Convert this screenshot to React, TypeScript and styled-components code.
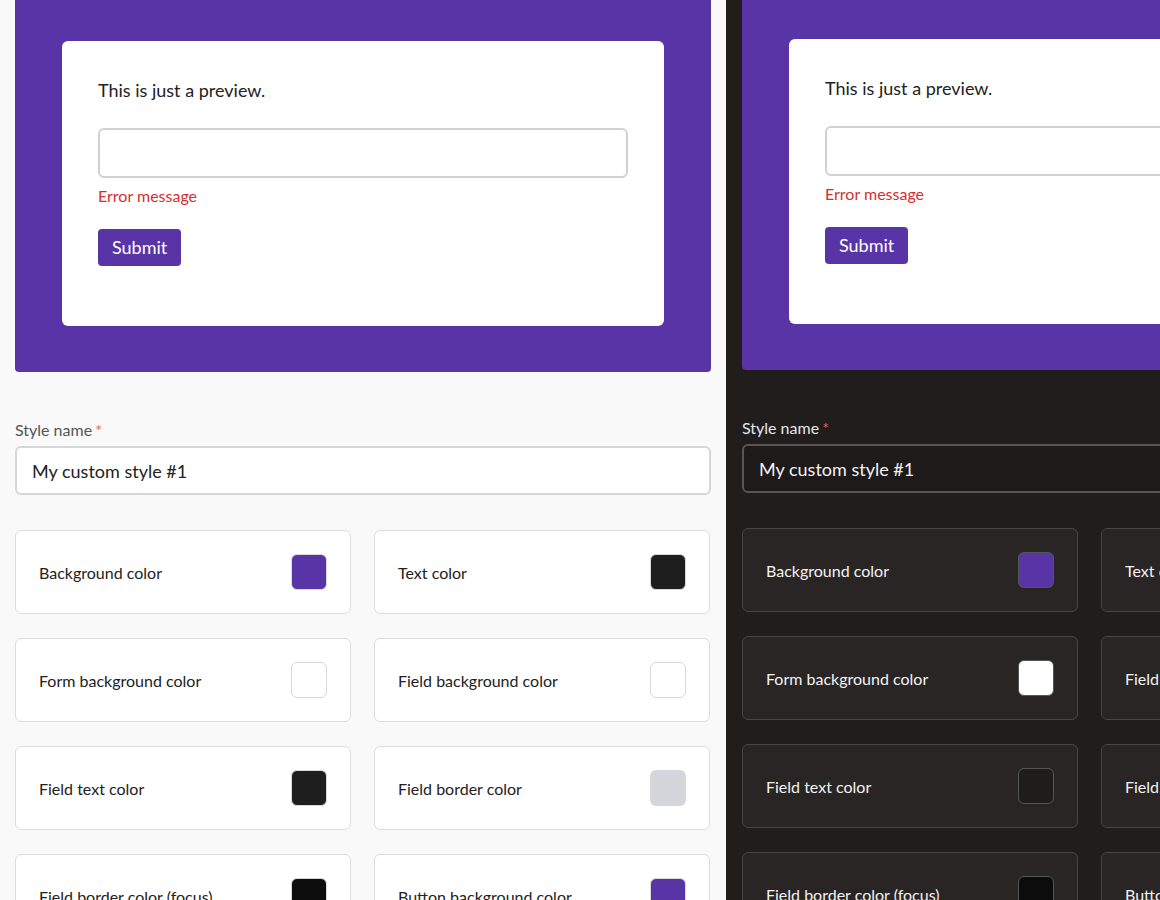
import styled, { createGlobalStyle } from "styled-components";

const GlobalStyle = createGlobalStyle`
  body { margin: 0; font-family: Lato, "Liberation Sans", sans-serif; overflow: hidden; }
`;

type Mode = "light" | "dark";

const palette = {
  light: { bg: "#f9f9f9", card: "#ffffff", border: "#dddddd", text: "#222222", label: "#555555", inputBorder: "#d6d6d6" },
  dark: { bg: "#211d1d", card: "#2a2525", border: "#4a4545", text: "#f2f2f2", label: "#e6e6e6", inputBorder: "#5a5555" },
};

const Page = styled.div`
  display: grid;
  grid-template-columns: 726px 726px;
  height: 900px;
  width: 1160px;
  overflow: hidden;
`;

const Panel = styled.div<{ $mode: Mode }>`
  background: ${(p) => palette[p.$mode].bg};
  padding: 0 15px 0 ${(p) => (p.$mode === "dark" ? "16px" : "15px")};
  display: flex;
  flex-direction: column;
  margin-top: ${(p) => (p.$mode === "dark" ? "-2px" : "0")};
`;

const Preview = styled.div`
  background: #5834a6;
  padding: 41px 47px 46px;
  border-radius: 0 0 4px 4px;
`;

const FormCard = styled.div`
  background: #fff;
  border-radius: 6px;
  padding: 38px 36px 60px;
  display: flex;
  flex-direction: column;
  align-items: flex-start;
`;

const PreviewText = styled.p`
  margin: 0 0 27px;
  font-size: 18px;
  color: #222;
`;

const PreviewInput = styled.div`
  width: 100%;
  box-sizing: border-box;
  height: 50px;
  border: 2px solid #d0d0d8;
  border-radius: 6px;
`;

const ErrorText = styled.div`
  color: #d32f2f;
  font-size: 16px;
  margin-top: 8px;
`;

const SubmitButton = styled.div`
  background: #5834a6;
  color: #fff;
  font-size: 18px;
  padding: 7px 14px 8px;
  border-radius: 4px;
  margin-top: 24px;
`;

const Label = styled.div<{ $mode: Mode }>`
  margin-top: 48px;
  font-size: 16px;
  color: ${(p) => palette[p.$mode].label};
  span { color: #e0664a; margin-left: 3px; }
`;

const NameInput = styled.div<{ $mode: Mode }>`
  margin-top: 7px;
  height: 49px;
  box-sizing: border-box;
  border: 2px solid ${(p) => palette[p.$mode].inputBorder};
  background: ${(p) => (p.$mode === "dark" ? "#1e1a1a" : "#fff")};
  border-radius: 6px;
  display: flex;
  align-items: center;
  padding: 0 15px;
  font-size: 18px;
  color: ${(p) => palette[p.$mode].text};
`;

const Grid = styled.div`
  margin-top: 35px;
  display: grid;
  grid-template-columns: 336px 336px;
  column-gap: 23px;
  row-gap: 24px;
`;

const ColorCard = styled.div<{ $mode: Mode }>`
  height: 84px;
  box-sizing: border-box;
  background: ${(p) => palette[p.$mode].card};
  border: 1px solid ${(p) => palette[p.$mode].border};
  border-radius: 6px;
  display: flex;
  align-items: center;
  justify-content: space-between;
  padding: 0 23px;
  font-size: 16px;
  color: ${(p) => palette[p.$mode].text};
  white-space: nowrap;
`;

const Swatch = styled.div<{ $color: string; $mode: Mode }>`
  width: 36px;
  height: 36px;
  flex-shrink: 0;
  box-sizing: border-box;
  border-radius: 6px;
  background: ${(p) => p.$color};
  border: 1px solid ${(p) => (p.$mode === "dark" ? "#555" : "#d8d8d8")};
`;

const fields = [
  ["Background color", "#5834a6"],
  ["Text color", "#1e1e1e"],
  ["Form background color", "#ffffff"],
  ["Field background color", "#ffffff"],
  ["Field text color", "#1e1e1e"],
  ["Field border color", "#d4d6dc"],
  ["Field border color (focus)", "#0c0c0c"],
  ["Button background color", "#5834a6"],
];

const StylePanel = ({ mode }: { mode: Mode }) => (
  <Panel $mode={mode}>
    <Preview>
      <FormCard>
        <PreviewText>This is just a preview.</PreviewText>
        <PreviewInput />
        <ErrorText>Error message</ErrorText>
        <SubmitButton>Submit</SubmitButton>
      </FormCard>
    </Preview>
    <Label $mode={mode}>
      Style name<span>*</span>
    </Label>
    <NameInput $mode={mode}>My custom style #1</NameInput>
    <Grid>
      {fields.map(([name, color]) => (
        <ColorCard key={name} $mode={mode}>
          {name}
          <Swatch $color={mode === "dark" && name === "Field text color" ? "#1f1c1c" : color} $mode={mode} />
        </ColorCard>
      ))}
    </Grid>
  </Panel>
);

export default function App() {
  return (
    <>
      <GlobalStyle />
      <Page>
        <StylePanel mode="light" />
        <StylePanel mode="dark" />
      </Page>
    </>
  );
}
